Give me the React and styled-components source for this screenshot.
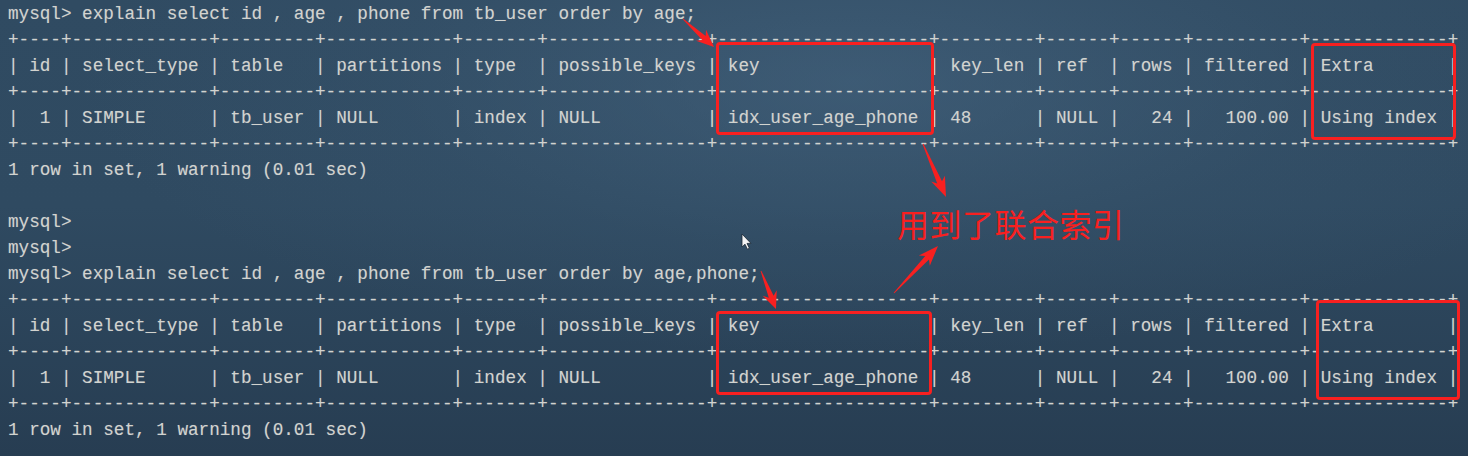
import React from 'react'
import styled, { createGlobalStyle } from 'styled-components'

const GlobalStyle = createGlobalStyle`
  html, body {
    margin: 0;
    padding: 0;
    background: #2c455b;
  }
`

const sep = '+----+-------------+---------+------------+-------+---------------+--------------------+---------+------+------+----------+-------------+'
const head = '| id | select_type | table   | partitions | type  | possible_keys | key                | key_len | ref  | rows | filtered | Extra       |'
const row = '|  1 | SIMPLE      | tb_user | NULL       | index | NULL          | idx_user_age_phone | 48      | NULL |   24 |   100.00 | Using index |'

const lines = [
  'mysql> explain select id , age , phone from tb_user order by age;',
  sep, head, sep, row, sep,
  '1 row in set, 1 warning (0.01 sec)',
  '',
  'mysql>',
  'mysql>',
  'mysql> explain select id , age , phone from tb_user order by age,phone;',
  sep, head, sep, row, sep,
  '1 row in set, 1 warning (0.01 sec)',
]

// arrows: tail -> tip
const arrows = [
  { x1: 683, y1: 19, x2: 714, y2: 47 },
  { x1: 923, y1: 144, x2: 946, y2: 197 },
  { x1: 894, y1: 293, x2: 938, y2: 246 },
  { x1: 761, y1: 271, x2: 776, y2: 309 },
]

const boxes = [
  { x: 716, y: 42, w: 218, h: 93 },
  { x: 1311, y: 43, w: 145, h: 97 },
  { x: 716, y: 311, w: 216, h: 84 },
  { x: 1316, y: 300, w: 144, h: 100 },
]

function arrowPoints({ x1, y1, x2, y2 }) {
  const dx = x2 - x1
  const dy = y2 - y1
  const len = Math.hypot(dx, dy)
  const ux = dx / len
  const uy = dy / len
  const nx = -uy
  const ny = ux
  const headLen = Math.min(20, len * 0.42)
  const headW = 7.5
  const neckW = 2.6
  const bx = x2 - ux * headLen
  const by = y2 - uy * headLen
  const nbx = x2 - ux * (headLen - 4)
  const nby = y2 - uy * (headLen - 4)
  const p = [
    [x1 + nx * 0.4, y1 + ny * 0.4],
    [nbx + nx * neckW, nby + ny * neckW],
    [bx + nx * headW, by + ny * headW],
    [x2, y2],
    [bx - nx * headW, by - ny * headW],
    [nbx - nx * neckW, nby - ny * neckW],
    [x1 - nx * 0.4, y1 - ny * 0.4],
  ]
  return p.map(([a, b]) => `${a.toFixed(1)},${b.toFixed(1)}`).join(' ')
}

function App() {
  return (
    <Screen>
      <GlobalStyle />
      <Terminal>
        {lines.map((l, i) => (
          <Line key={i}>{l}</Line>
        ))}
      </Terminal>

      {boxes.map((b, i) => (
        <RedBox key={i} style={{ left: b.x, top: b.y, width: b.w, height: b.h }} />
      ))}

      <Overlay width="1468" height="456" viewBox="0 0 1468 456">
        {arrows.map((a, i) => (
          <polygon key={i} points={arrowPoints(a)} fill="#f82020" />
        ))}
        <path
          d="M742 234 L742 247 L745 244.2 L747.4 249.2 L749.4 248.2 L747 243.4 L751 243.4 Z"
          fill="#f4f4f4"
          stroke="#1b2733"
          strokeWidth="0.8"
        />
      </Overlay>

      <Note>用到了联合索引</Note>
    </Screen>
  )
}

export default App

const Screen = styled.div`
  position: relative;
  width: 1468px;
  height: 456px;
  overflow: hidden;
  background:
    radial-gradient(ellipse 70% 80% at 58% 18%, rgba(72, 104, 132, 0.55) 0%, rgba(60, 90, 116, 0.25) 45%, rgba(0, 0, 0, 0) 75%),
    linear-gradient(180deg, #304b62 0%, #2f4a61 45%, #273d52 100%);
`

const Terminal = styled.div`
  padding: 1px 0 0 8px;
  font-family: "Liberation Mono", "DejaVu Sans Mono", monospace;
  font-size: 17.65px;
  line-height: 26px;
  color: #d2d3cf;
  text-shadow: 0 0 1px rgba(220, 220, 220, 0.3);
`

const Line = styled.div`
  white-space: pre;
  height: 26px;
`

const RedBox = styled.div`
  position: absolute;
  box-sizing: border-box;
  border: 3px solid #f82020;
  border-radius: 4px;
`

const Overlay = styled.svg`
  position: absolute;
  left: 0;
  top: 0;
`

const Note = styled.div`
  position: absolute;
  left: 897px;
  top: 204px;
  font-family: "Noto Sans CJK SC", "Noto Sans", sans-serif;
  font-size: 32px;
  line-height: 38px;
  color: #f82020;
  letter-spacing: 0.5px;
`
